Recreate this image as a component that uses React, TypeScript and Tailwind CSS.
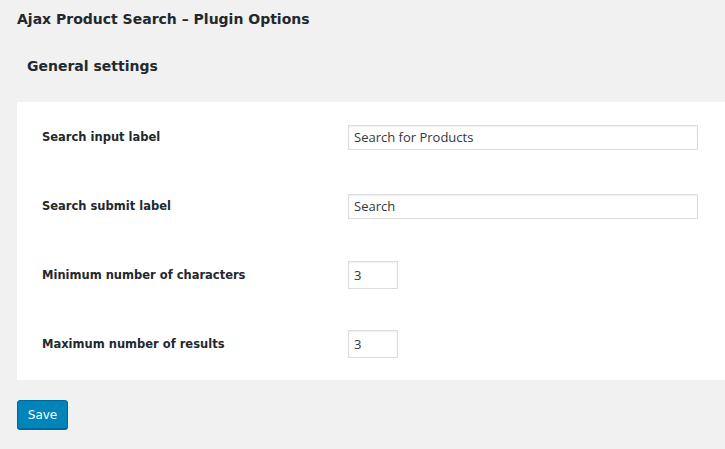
export default function App() {
  const rows = [
    { label: "Search input label", value: "Search for Products", wide: true },
    { label: "Search submit label", value: "Search", wide: true },
    { label: "Minimum number of characters", value: "3", wide: false },
    { label: "Maximum number of results", value: "3", wide: false },
  ];

  return (
    <div className="min-h-[449px] w-[725px] overflow-hidden bg-[#f1f1f1] pl-[17px] text-[#23282d] [font-family:'DejaVu_Sans',sans-serif]">
      {/* Page title */}
      <h1 className="pt-[9px] text-[14px] leading-[20px] font-bold">Ajax Product Search – Plugin Options</h1>
      <h2 className="mt-[27px] pl-[10px] text-[14px] leading-[20px] font-bold">General settings</h2>

      {/* Settings panel */}
      <div className="mt-[26px] flex flex-col gap-[41px] bg-white pt-[21px] pb-[22px] pl-[25px]">
        {rows.map((row) => (
          <div key={row.label} className="flex h-[28px] items-center">
            <div className="w-[306px] text-[11.5px] leading-[16px] font-bold">{row.label}</div>
            <input
              readOnly
              value={row.value}
              className={
                row.wide
                  ? "h-[25px] w-[350px] border border-[#dddddd] px-[5px] text-[13px] text-[#32373c] shadow-[inset_0_1px_2px_rgba(0,0,0,0.07)] outline-none [font-family:'Open_Sans',sans-serif]"
                  : "h-[28px] w-[50px] border border-[#dddddd] px-[5px] text-[13px] text-[#32373c] shadow-[inset_0_1px_2px_rgba(0,0,0,0.07)] outline-none [font-family:'Open_Sans',sans-serif]"
              }
            />
          </div>
        ))}
      </div>

      <button className="mt-[20px] h-[29px] w-[51px] rounded-[3px] border border-[#006799] bg-[#0085ba] text-[12px] text-white shadow-[0_1px_0_#006799] [font-family:'DejaVu_Sans',sans-serif]">
        Save
      </button>
    </div>
  );
}
